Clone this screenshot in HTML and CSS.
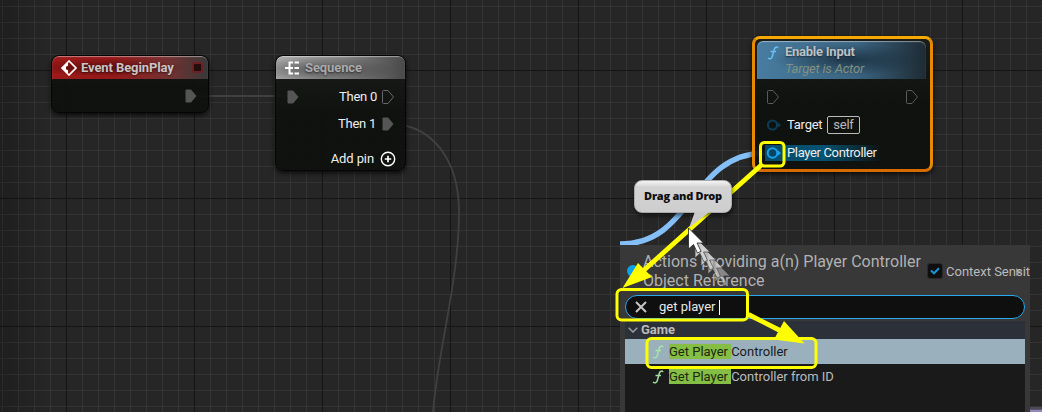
FILE: index.html
```
<!DOCTYPE html>
<html lang="en">
<head>
<meta charset="utf-8">
<title>Event Graph</title>
<link rel="stylesheet" href="styles.css">
</head>
<body>
<main class="graph">
  <svg class="layer" width="1042" height="412" viewBox="0 0 1042 412" fill="none">
    <path d="M190 96H292M388 124C432 123 459 160 459 212C459 280 438 350 433 412" stroke="#404040" stroke-width="1.8"/>
    <path d="M620 244C694 244 690 154 765 153" stroke="#84bff8" stroke-width="5.500"/>
    <path d="M1030 408H1042" stroke="#4c4a57" stroke-width="2"/>
    <path d="M1030 411H1042" stroke="#9388b8" stroke-width="3"/>
  </svg>

  <section class="node begin">
    <header class="head red">
      <svg width="16" height="16" viewBox="0 0 16 16"><path d="M1 8L8 1L15 8L8 15Z" fill="none" stroke="#fff" stroke-width="1.6"/><path d="M1 8L7 2V5.500L4.800 8L7 10.500V14Z" fill="#fff"/><path d="M5 6.600H8V4.600L12 8L8 11.400V9.400H5Z" fill="#6b1010"/></svg>
      <h2>Event BeginPlay</h2><i class="delegate"></i>
    </header>
    <div class="row out">
      <svg class="pin" width="12" height="14" viewBox="0 0 12 14"><path d="M.5 1.5Q.5.5 1.5.5H6L11.5 7L6 13.5H1.5Q.5 13.5.5 12.5Z" fill="#555653"/></svg>
    </div>
  </section>

  <section class="node seq">
    <header class="head gray">
      <svg width="16" height="14" viewBox="0 0 16 14"><path d="M0 7H5M8 1.5H4.5V12.5H8M4.5 7H8M9.5 1.5H14M9.5 7H14M9.5 12.5H14" stroke="#fff" stroke-width="2" fill="none"/></svg>
      <h2>Sequence</h2>
    </header>
    <div class="row">
      <svg class="pin" width="12" height="14" viewBox="0 0 12 14"><path d="M.5 1.5Q.5.5 1.5.5H6L11.5 7L6 13.5H1.5Q.5 13.5.5 12.5Z" fill="#555"/></svg>
      <span class="push">Then 0</span>
      <svg class="pin" width="12" height="14" viewBox="0 0 12 14"><path d="M.5 1.5Q.5.5 1.5.5H6L11.5 7L6 13.5H1.5Q.5 13.5.5 12.5Z" fill="none" stroke="#686868"/></svg>
    </div>
    <div class="row second">
      <span class="push">Then 1</span>
      <svg class="pin" width="12" height="14" viewBox="0 0 12 14"><path d="M.5 1.5Q.5.5 1.5.5H6L11.5 7L6 13.5H1.5Q.5 13.5.5 12.5Z" fill="#555"/></svg>
    </div>
    <div class="row add">
      <span class="push">Add pin</span>
      <svg width="16" height="16" viewBox="0 0 16 16"><path d="M8 4.800V11.200M4.800 8H11.200" stroke="#fff" stroke-width="1.7"/><circle cx="8" cy="8" r="6.7" fill="none" stroke="#fff" stroke-width="1.4"/></svg>
    </div>
  </section>

  <section class="node enable">
    <header class="head blue">
      <svg class="fn" width="12" height="14" viewBox="0 0 12 14"><path d="M11 2C10 .6 8 .8 7.3 3.2L5.3 10.5C4.7 13 2.5 13.5 1 12M3.5 5.5H9" stroke="#69bdf5" stroke-width="1.5" fill="none"/></svg>
      <div><h2>Enable Input</h2><p>Target is Actor</p></div>
    </header>
    <div class="row exec">
      <svg class="pin" width="12" height="14" viewBox="0 0 12 14"><path d="M.5 1.5Q.5.5 1.5.5H6L11.5 7L6 13.5H1.5Q.5 13.5.5 12.5Z" fill="none" stroke="#5b5b5b"/></svg>
      <svg class="pin" width="12" height="14" viewBox="0 0 12 14"><path d="M.5 1.5Q.5.5 1.5.5H6L11.5 7L6 13.5H1.5Q.5 13.5.5 12.5Z" fill="none" stroke="#5b5b5b"/></svg>
    </div>
    <div class="row target">
      <svg width="16" height="14" viewBox="0 0 16 14"><circle cx="6.5" cy="7" r="4.6" fill="none" stroke="#0d3d55" stroke-width="2"/><path d="M12 4.500L15 7L12 9.500Z" fill="#0d3d55"/></svg>
      <span>Target</span><span class="self">self</span>
    </div>
    <div class="row player">
      <svg width="16" height="14" viewBox="0 0 16 14"><circle cx="6.5" cy="7" r="4.8" fill="#064560" stroke="#17a2ed" stroke-width="2"/><path d="M12 4.500L15 7L12 9.500Z" fill="#17a2ed"/></svg>
      <span>Player Controller</span>
    </div>
  </section>

  <aside class="menu">
    <div class="menu-head">
      <i class="dot"></i>
      <h1>Actions providing a(n) Player Controller Object Reference</h1>
      <div class="check"><svg width="10" height="8" viewBox="0 0 10 8"><path d="M1 3.500L4 6.300L9 1.200" fill="none" stroke="#1696d6" stroke-width="2"/></svg></div>
      <span class="context">Context Sensit</span>
      <svg class="expand" width="6" height="8" viewBox="0 0 6 8"><path d="M0 0L6 4L0 8Z" fill="#aaa" opacity=".65"/></svg>
    </div>
    <div class="search">
      <svg width="12" height="12" viewBox="0 0 12 12"><path d="M1 1L11 11M11 1L1 11" stroke="#c5c5c5" stroke-width="2"/></svg>
      <span>get player</span><i class="caret"></i>
    </div>
    <div class="list">
      <div class="category"><svg width="10" height="6" viewBox="0 0 10 6"><path d="M.7.7L5 5L9.3.7" fill="none" stroke="#9a9da0" stroke-width="1.5"/></svg><b>Game</b></div>
      <div class="item selected">
        <svg width="12" height="14" viewBox="0 0 12 14"><path d="M11 2C10 .6 8 .8 7.3 3.2L5.3 10.5C4.7 13 2.5 13.5 1 12M3.5 5.5H9" stroke="#a5e5a5" stroke-width="1.5" fill="none"/></svg>
        <span><mark>Get Player </mark>Controller</span>
      </div>
      <div class="item">
        <svg width="12" height="14" viewBox="0 0 12 14"><path d="M11 2C10 .6 8 .8 7.3 3.2L5.3 10.5C4.7 13 2.5 13.5 1 12M3.5 5.5H9" stroke="#a0dca0" stroke-width="1.5" fill="none"/></svg>
        <span><mark>Get Player </mark>Controller from ID</span>
      </div>
    </div>
  </aside>

  <svg class="layer notes" width="1042" height="412" viewBox="0 0 1042 412" fill="none">
    <g stroke="#ff0" stroke-width="3">
      <rect x="760.5" y="142.500" width="23.500" height="23.500" rx="4"/>
      <rect x="617" y="289.500" width="130.500" height="30.500" rx="4.500"/>
      <rect x="647" y="338.500" width="169" height="29" rx="4.500"/>
    </g>
    <path d="M762 164.500L643 271M748.500 314.500L782 331.500" stroke="#ff0" stroke-width="4.800"/>
    <path d="M622.500 288L638 263L652 277ZM804.500 343.500L784 321L774 339.500Z" fill="#ff0"/>
  </svg>
  <div class="callout">Drag and Drop</div>
  <svg class="layer" width="1042" height="412" viewBox="0 0 1042 412">
    <defs><path id="cursor" d="M0 0V21L5 16.500L9 25L12.500 23.300L8.600 15H15Z"/></defs>
    <path d="M695 211.500L689 228L710 211.500Z" fill="#c9c9c9"/>
    <g fill="#d5d5d5" stroke="#444" stroke-width=".8">
      <use href="#cursor" transform="translate(715 261)" opacity=".5"/>
      <use href="#cursor" transform="translate(708 253)" opacity=".65"/>
      <use href="#cursor" transform="translate(701 245)" opacity=".8"/>
      <use href="#cursor" transform="translate(695 237)" opacity=".92"/>
    </g>
    <use href="#cursor" transform="translate(688.500 228)" fill="#fff" stroke="#222" stroke-width=".8"/>
  </svg>
</main>
</body>
</html>
```
FILE: styles.css
```
* { box-sizing: border-box; }
body { margin: 0; font: 13px/16px Roboto, sans-serif; color: #eee; background: #262626; }
h1, h2, p { margin: 0; }
svg { flex: none; display: block; }
.graph {
  position: relative; width: 1042px; height: 412px; overflow: hidden;
  background-color: #262626;
  background-image:
    linear-gradient(90deg, rgba(0,0,0,.2), transparent 50px),
    linear-gradient(90deg, #151515 1px, transparent 1px),
    linear-gradient(#151515 1px, transparent 1px),
    linear-gradient(90deg, #343434 1px, transparent 1px),
    linear-gradient(#343434 1px, transparent 1px);
  background-size: 100% 100%, 128px 128px, 128px 128px, 16px 16px, 16px 16px;
  background-position: 0 0, 66px 0, 0 70px, 2px 0, 0 6px;
}
.layer { position: absolute; left: 0; top: 0; }
.node {
  position: absolute; border: 1.500px solid #050505; border-radius: 8px; overflow: hidden;
  background: linear-gradient(rgba(25,28,25,.92), rgba(13,16,13,.93) 50%);
  box-shadow: 0 2px 5px rgba(0,0,0,.75);
}
.begin { left: 51px; top: 55px; width: 158px; height: 58px; }
.seq { left: 275px; top: 55px; width: 131px; height: 116px; }
.enable { left: 752px; top: 36px; width: 181px; height: 136px; padding: 2px 4px 2px 2px; border: 3px solid #e88a00; border-color: #f5a800 #e88a00 #d66c00; }
.head { display: flex; align-items: center; height: 23px; padding-left: 9px; gap: 4px; border-radius: 6px 6px 0 0; box-shadow: inset 0 1px 1px rgba(255,255,255,.45); }
.head h2 { font-size: 13px; line-height: 16px; font-weight: 700; letter-spacing: -.1px; color: #cbc5c5; text-shadow: 0 1px 2px #0008; }
.red { background: radial-gradient(ellipse at 35% 50%, #4b0c0dcc, transparent 55%), linear-gradient(90deg, #9e1919, #94191a 40%, #733232 75%, #383838); }
.gray { background: radial-gradient(ellipse at 35% 60%, #3339, transparent 65%), linear-gradient(90deg, #aaa, #858585 50%, #494949); }
.head.gray h2 { color: #aaa; }
.delegate { width: 11px; height: 11px; margin-left: auto; margin-right: 5px; border: 2px solid #6c2022; border-radius: 2px; background: #240d0d; }
.row { display: flex; align-items: center; height: 28px; }
.out { justify-content: flex-end; padding: 5px 11px 0 0; }
.push { margin-left: auto; }
.seq .row { padding: 2px 11px 0 11px; height: 33px; gap: 5px; letter-spacing: -.25px; }
.seq .row.second { padding-top: 0; height: 24px; gap: 6px; }
.seq .row.add { height: 46px; padding: 0 9px 0 0; gap: 6px; letter-spacing: -.1px; }
.blue { height: 38px; padding-left: 10px; gap: 6px; background: radial-gradient(ellipse at 55% 50%, #172b3acc, transparent 58%), linear-gradient(90deg, #487ca0, #3a637f 60%, #1e2b34); }
.blue .fn { align-self: flex-start; margin-top: 5px; }
.head.blue h2 { line-height: 17px; letter-spacing: -.25px; color: #bac2c6; }
.blue p { font-style: italic; line-height: 17px; letter-spacing: -.2px; color: #81907f; }
.exec { justify-content: space-between; padding: 1px 8px 0 10px; height: 34px; }
.target { padding-left: 9px; gap: 5px; height: 24px; letter-spacing: -.25px; }
.self { border: 1px solid #bbb; border-radius: 2px; padding: 0 5px; color: #bbb; height: 18px; }
.player { height: 16px; margin: 8px 44px 0 8px; padding-left: 1px; gap: 5px; white-space: nowrap; letter-spacing: -.35px; background: linear-gradient(90deg, #064c69, #055273 50%, #05527300); }
.menu { position: absolute; left: 620px; top: 245px; width: 410px; height: 167px; padding: 0 5px; background: #383838; overflow: hidden; }
.menu-head { display: flex; align-items: center; height: 50px; }
.dot { flex: none; width: 12px; height: 12px; margin: 2px 4px 0 2px; border-radius: 50%; background: #0ba2ec; }
h1 { width: 284px; flex: none; padding-top: 1px; font-size: 16px; line-height: 19px; font-weight: 400; color: #b1b1b1; }
.check { display: grid; place-items: center; flex: none; width: 16px; height: 16px; margin: 2px 3px 0 0; border: 1px solid #292929; border-radius: 3px; background: #0f0f0f; }
.context { white-space: nowrap; padding-top: 3px; color: #bbb; }
.expand { margin: 3px 0 0 -14px; }
.search { display: flex; align-items: center; height: 24px; padding-left: 9px; border: 1px solid #26a9ee; border-radius: 12px; background: #0f0f0f; }
.search span { margin-left: 12px; color: #e8e8e8; }
.caret { width: 1px; height: 15px; margin-left: 4px; background: #fff; }
.list { height: 91px; margin-top: 2px; background: #1a1a1a; }
.category { display: flex; align-items: center; gap: 3px; height: 18px; padding-left: 3px; background: #2b3039; color: #bbb; }
.item { display: flex; align-items: center; gap: 5px; height: 25px; padding-left: 27px; color: #bbb; white-space: pre; }
.selected { background: #9ab1bd; color: #171c20; }
mark { background: #85bd45; color: #1b290d; }
.callout { position: absolute; left: 634px; top: 180px; width: 98px; height: 33px; border: 1px solid #aaa; border-radius: 8px; background: linear-gradient(#f4f4f4, #d3d3d3 20%, #cecece); box-shadow: 1px 3px 4px #0008; color: #101010; font: 800 11px/30px "Open Sans", sans-serif; letter-spacing: -.25px; text-align: center; }
```
